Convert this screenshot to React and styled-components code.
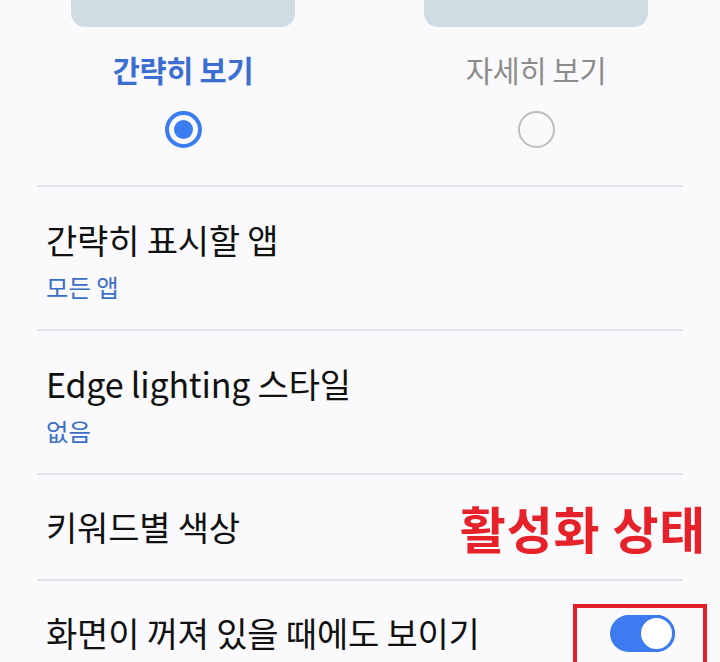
import React from "react";
import styled, { createGlobalStyle } from "styled-components";

const Global = createGlobalStyle`
  html, body { margin: 0; padding: 0; background: #fafafc; }
  body { font-family: "Noto Sans CJK KR", "Noto Sans", sans-serif; overflow: hidden; }
`;

const Page = styled.div`
  width: 720px;
  height: 662px;
  background: #fafafc;
  overflow: hidden;
  position: relative;
`;

const Previews = styled.div`
  display: grid;
  grid-template-columns: 224px 224px;
  column-gap: 129px;
  padding-left: 71px;
`;

const PreviewCol = styled.div`
  display: flex;
  flex-direction: column;
  align-items: center;
`;

const PreviewBox = styled.div`
  width: 224px;
  height: 27px;
  background: #cfdce3;
  border-radius: 0 0 14px 14px;
`;

const PreviewLabel = styled.div`
  margin-top: 24px;
  font-size: 29.5px;
  line-height: 36px;
  font-weight: ${(p) => (p.$active ? 700 : 400)};
  color: ${(p) => (p.$active ? "#3a6fd1" : "#8c8c8c")};
  letter-spacing: -0.3px;
`;

const Radio = styled.div`
  margin-top: 24px;
  width: 37px;
  height: 37px;
  box-sizing: border-box;
  border-radius: 50%;
  border: ${(p) => (p.$checked ? "4px solid #3b7cf0" : "2.5px solid #bdbdbd")};
  display: flex;
  align-items: center;
  justify-content: center;
  &::after {
    content: "";
    display: ${(p) => (p.$checked ? "block" : "none")};
    width: 19px;
    height: 19px;
    border-radius: 50%;
    background: #3b7cf0;
  }
`;

const List = styled.div`
  margin-top: 37px;
  padding: 0 37px;
`;

const Row = styled.div`
  display: flex;
  align-items: center;
  justify-content: space-between;
  border-top: 2px solid #e2e2e6;
  padding: ${(p) => (p.$sub ? "33px 9px 27px" : "32px 9px 32px")};
  position: relative;
`;

const RowText = styled.div`
  display: flex;
  flex-direction: column;
`;

const Title = styled.div`
  font-size: 34px;
  line-height: 40px;
  color: #111;
  letter-spacing: -0.2px;
`;

const Sub = styled.div`
  margin-top: 12px;
  font-size: 24.4px;
  line-height: 30px;
  color: #3a6ec7;
`;

const Annotation = styled.div`
  position: absolute;
  right: -23px;
  top: 50%;
  transform: translateY(-50%);
  font-size: 50px;
  line-height: 52px;
  font-weight: 700;
  color: #e62129;
  letter-spacing: 0.8px;
`;

const ToggleWrap = styled.div`
  position: relative;
  margin-right: -1px;
`;

const Toggle = styled.div`
  width: 65px;
  height: 37px;
  border-radius: 19px;
  background: #3e7bf0;
  box-sizing: border-box;
  display: flex;
  justify-content: flex-end;
  align-items: center;
`;

const Knob = styled.div`
  width: 37px;
  height: 37px;
  box-sizing: border-box;
  border-radius: 50%;
  background: #fff;
  border: 3.5px solid #3e7bf0;
`;

const Highlight = styled.div`
  position: absolute;
  left: -37px;
  top: -11px;
  width: 134px;
  height: 70px;
  box-sizing: border-box;
  border: 4px solid #e1202b;
`;

export default function App() {
  return (
    <Page>
      <Global />
      <Previews>
        <PreviewCol>
          <PreviewBox />
          <PreviewLabel $active>간략히 보기</PreviewLabel>
          <Radio $checked />
        </PreviewCol>
        <PreviewCol>
          <PreviewBox />
          <PreviewLabel>자세히 보기</PreviewLabel>
          <Radio />
        </PreviewCol>
      </Previews>
      <List>
        <Row $sub>
          <RowText>
            <Title>간략히 표시할 앱</Title>
            <Sub>모든 앱</Sub>
          </RowText>
        </Row>
        <Row $sub>
          <RowText>
            <Title>Edge lighting 스타일</Title>
            <Sub>없음</Sub>
          </RowText>
        </Row>
        <Row>
          <RowText>
            <Title>키워드별 색상</Title>
          </RowText>
          <Annotation>활성화 상태</Annotation>
        </Row>
        <Row>
          <RowText>
            <Title>화면이 꺼져 있을 때에도 보이기</Title>
          </RowText>
          <ToggleWrap>
            <Toggle>
              <Knob />
            </Toggle>
            <Highlight />
          </ToggleWrap>
        </Row>
      </List>
    </Page>
  );
}
